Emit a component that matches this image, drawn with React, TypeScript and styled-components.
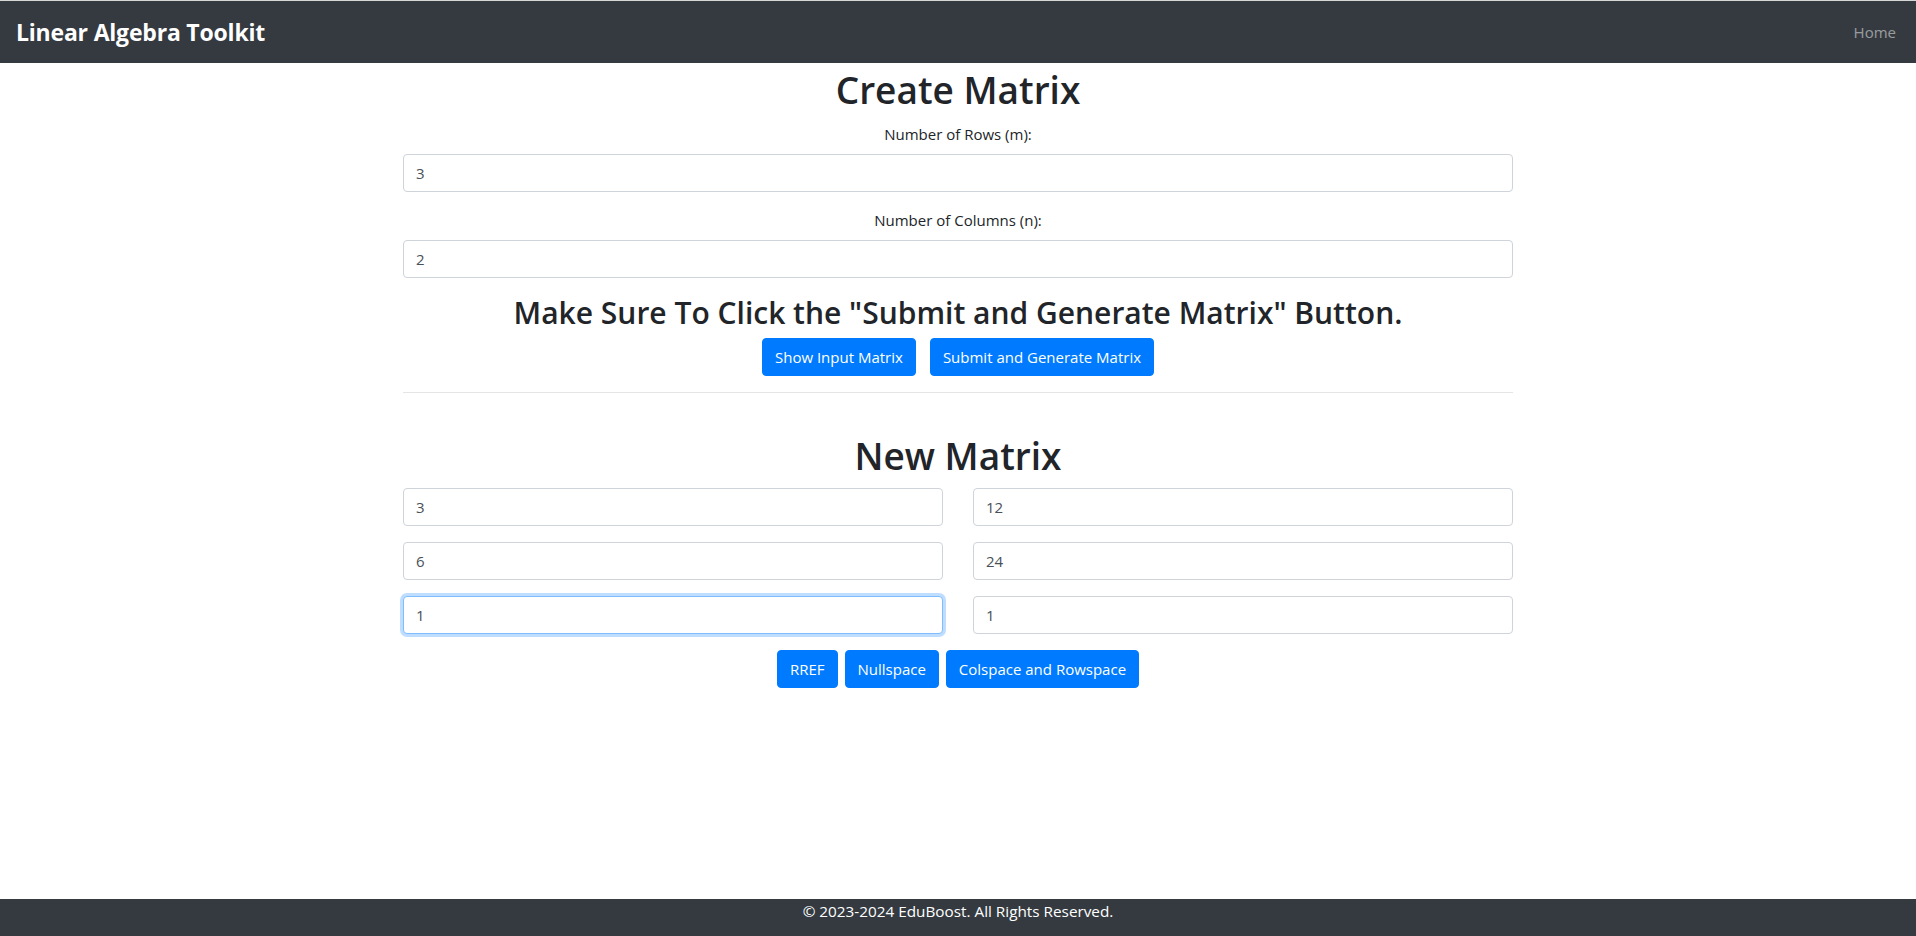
import React from "react";
import styled, { createGlobalStyle } from "styled-components";

const Global = createGlobalStyle`
  html, body { margin: 0; padding: 0; background: #fff; }
  body {
    font-family: "Segoe UI", "Open Sans", "Noto Sans", sans-serif;
    font-size: 16px;
    line-height: 1.5;
    color: #212529;
  }
  * { box-sizing: border-box; }
`;

const Page = styled.div`
  min-height: 100vh;
  display: flex;
  flex-direction: column;
  border-top: 1px solid #d6d6d6;
`;

const Navbar = styled.nav`
  background: #343a40;
  height: 62px;
  padding: 0 20px 0 16px;
  display: flex;
  align-items: center;
  justify-content: space-between;
`;

const Brand = styled.a`
  color: #fff;
  font-weight: 700;
  font-size: 23px;
  letter-spacing: -0.2px;
  text-decoration: none;
`;

const NavLink = styled.a`
  color: rgba(255, 255, 255, 0.5);
  font-size: 15px;
  text-decoration: none;
`;

const Main = styled.main`
  flex: 1;
  width: 1140px;
  margin: 0 auto;
  padding: 0 15px;
`;

const Title = styled.h1<{ $top?: number }>`
  margin: ${(p) => p.$top ?? 3}px 0 8px;
  font-size: 37px;
  font-weight: 600;
  line-height: 48px;
  text-align: center;
`;

const FormGroup = styled.div`
  margin-bottom: 16px;
  display: flex;
  flex-direction: column;
`;

const Label = styled.label`
  display: block;
  text-align: center;
  font-size: 15px;
  line-height: 24px;
  margin-bottom: 8px;
`;

const Input = styled.input<{ $focus?: boolean }>`
  display: block;
  width: 100%;
  height: 38px;
  padding: 6px 12px;
  font-family: inherit;
  font-size: 15px;
  color: #495057;
  background: #fff;
  border: 1px solid ${(p) => (p.$focus ? "#80bdff" : "#ced4da")};
  border-radius: 4px;
  outline: none;
  box-shadow: ${(p) => (p.$focus ? "0 0 0 3px rgba(0,123,255,.25)" : "none")};
`;

const Subtitle = styled.h2`
  margin: 0 0 6px;
  font-size: 30px;
  font-weight: 600;
  line-height: 38px;
  text-align: center;
`;

const ButtonRow = styled.div<{ $gap: number }>`
  display: flex;
  justify-content: center;
  gap: ${(p) => p.$gap}px;
`;

const Button = styled.button`
  height: 38px;
  padding: 0 12px;
  font-family: inherit;
  font-size: 15px;
  color: #fff;
  background: #007bff;
  border: 1px solid #007bff;
  border-radius: 4px;
  cursor: pointer;
`;

const Divider = styled.hr`
  margin: 16px 0 0;
  border: 0;
  border-top: 1px solid rgba(0, 0, 0, 0.1);
`;

const Grid = styled.div`
  display: grid;
  grid-template-columns: 1fr 1fr;
  column-gap: 30px;
  row-gap: 16px;
  margin-bottom: 16px;
`;

const Footer = styled.footer`
  background: #343a40;
  color: #fff;
  text-align: center;
  font-size: 15.3px;
  line-height: 24px;
  padding: 0 0 13px;
`;

const matrix = [
  ["3", "12"],
  ["6", "24"],
  ["1", "1"],
];

export default function App() {
  return (
    <>
      <Global />
      <Page>
        <Navbar>
          <Brand href="#">Linear Algebra Toolkit</Brand>
          <NavLink href="#">Home</NavLink>
        </Navbar>
        <Main>
          <Title>Create Matrix</Title>
          <FormGroup>
            <Label>Number of Rows (m):</Label>
            <Input defaultValue="3" />
          </FormGroup>
          <FormGroup>
            <Label>Number of Columns (n):</Label>
            <Input defaultValue="2" />
          </FormGroup>
          <Subtitle>Make Sure To Click the "Submit and Generate Matrix" Button.</Subtitle>
          <ButtonRow $gap={14}>
            <Button>Show Input Matrix</Button>
            <Button>Submit and Generate Matrix</Button>
          </ButtonRow>
          <Divider />
          <Title $top={39}>New Matrix</Title>
          <Grid>
            {matrix.flatMap((row, r) =>
              row.map((v, c) => (
                <Input key={`${r}-${c}`} defaultValue={v} $focus={r === 2 && c === 0} />
              ))
            )}
          </Grid>
          <ButtonRow $gap={7}>
            <Button>RREF</Button>
            <Button>Nullspace</Button>
            <Button>Colspace and Rowspace</Button>
          </ButtonRow>
        </Main>
        <Footer>© 2023-2024 EduBoost. All Rights Reserved.</Footer>
      </Page>
    </>
  );
}
